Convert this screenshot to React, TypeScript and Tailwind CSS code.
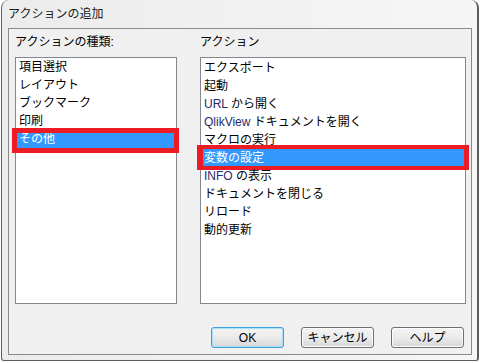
import React from "react";

const leftItems = ["項目選択", "レイアウト", "ブックマーク", "印刷", "その他"];

const rightItems: React.ReactNode[] = [
  "エクスポート",
  "起動",
  <>
    <span className="text-[#1f2a6e]">URL</span> から開く
  </>,
  <>
    <span className="text-[#1f2a6e]">QlikView</span> ドキュメントを開く
  </>,
  "マクロの実行",
  "変数の設定",
  <>
    <span className="text-[#1f2a6e]">INFO</span> の表示
  </>,
  "ドキュメントを閉じる",
  "リロード",
  "動的更新",
];

function Btn({ label, primary }: { label: string; primary?: boolean }) {
  return (
    <div
      className={
        "w-[73px] h-[21px] rounded-[3px] border flex items-center justify-center text-[12px] text-black bg-linear-to-b from-[#f4f4f4] via-[#ebebeb] to-[#d6d6d6] " +
        (primary
          ? "border-[#3c9fe0] shadow-[inset_0_0_0_1px_#a9e1f8]"
          : "border-[#707070] shadow-[inset_0_0_0_1px_#fcfcfc]")
      }
    >
      {label}
    </div>
  );
}

export default function App() {
  return (
    <div className="w-[480px] h-[363px] bg-white overflow-hidden font-['Liberation_Sans','Noto_Sans_CJK_JP',sans-serif] text-black">
      <div className="ml-px w-[478px] h-[361px] border-l border-r-2 border-b border-[#5c5c5c] rounded-tl-[8px] rounded-tr-[8px] rounded-b-[3px] bg-linear-to-r from-[#ececec] via-[#f1f1f1] to-[#f6f6f6] flex flex-col">
        <div className="h-[28px] pl-[6px] flex items-center text-[12px] leading-[14px] text-[#1a1a1a]">
          アクションの追加
        </div>
        <div className="ml-[6px] mr-[5px] h-[327px] border border-[#8a8a8a] bg-[#f0f0f0] flex flex-col">
          <div className="flex pl-[6px] gap-[23px] pt-[6px]">
            <div className="flex flex-col w-[162px]">
              <div className="text-[12px] leading-[14px]">アクションの種類:</div>
              <div className="mt-[8px] h-[247px] border border-[#828790] bg-white flex flex-col">
                {leftItems.map((t, i) => (
                  <div
                    key={i}
                    className={
                      "relative h-[18px] leading-[18px] text-[12px] pl-[3px] whitespace-nowrap " +
                      (i === 4 ? "bg-[#3399ff] text-white" : "")
                    }
                  >
                    {t}
                    {i === 4 && (
                      <div className="absolute -left-[4px] -right-[3px] -top-[2px] -bottom-[5px] border-[5px] border-[#ed1c24]" />
                    )}
                  </div>
                ))}
              </div>
            </div>
            <div className="flex flex-col w-[266px]">
              <div className="text-[12px] leading-[14px]">アクション</div>
              <div className="mt-[8px] h-[247px] border border-[#828790] bg-white flex flex-col pt-px">
                {rightItems.map((t, i) => (
                  <div
                    key={i}
                    className={
                      "relative h-[18px] leading-[18px] text-[12px] pl-[3px] whitespace-nowrap " +
                      (i === 5 ? "bg-[#3399ff] text-white" : "")
                    }
                  >
                    {t}
                    {i === 5 && (
                      <div className="absolute -left-[4px] -right-[4px] -top-[4px] -bottom-[3px] border-t-4 border-b-4 border-l-[6px] border-r-[5px] border-[#ed1c24]" />
                    )}
                  </div>
                ))}
              </div>
            </div>
          </div>
          <div className="mt-[23px] flex justify-end pr-[7px] gap-[17px]">
            <Btn label="OK" primary />
            <Btn label="キャンセル" />
            <Btn label="ヘルプ" />
          </div>
        </div>
      </div>
    </div>
  );
}
